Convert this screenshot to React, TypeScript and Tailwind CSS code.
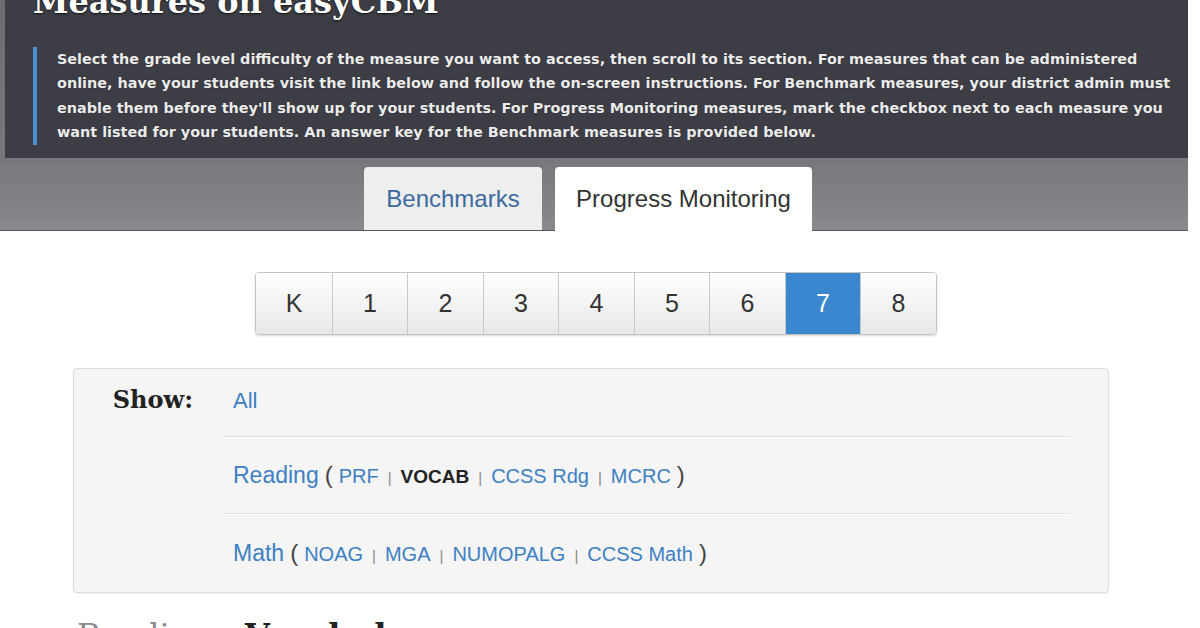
import React from "react";

const grades = ["K", "1", "2", "3", "4", "5", "6", "7", "8"];
const active = "7";

const sans = "font-['Liberation_Sans',Arial,sans-serif]";
const serif = "font-['DejaVu_Serif','Liberation_Serif',serif]";

const Pipe = () => <span className="mx-[9px] text-[15px] text-[#888]">|</span>;

const Sub = ({ children, bold }: { children: React.ReactNode; bold?: boolean }) =>
  bold ? (
    <span className="text-[19px] font-bold text-[#222]">{children}</span>
  ) : (
    <span className="text-[20px] text-[#3d80c3]">{children}</span>
  );

const Paren = ({ children }: { children: string }) => (
  <span className="mx-[6px] text-[24px] text-[#444]">{children}</span>
);

export default function App() {
  return (
    <div className={`w-[1200px] h-[628px] overflow-hidden bg-white ${sans}`}>
      <div className="w-[1188px]">
        {/* header */}
        <div className="bg-[linear-gradient(#6c6c71,#77777c_70%,#8a8a8e)]">
          <div className="ml-[5px] flex h-[158px] flex-col bg-[#3d3d45] pl-[28px] pr-[12px]">
            <h1
              className={`-mt-[14px] text-[32px] leading-none font-bold text-white ${serif} [text-shadow:0_1px_2px_rgba(0,0,0,0.7)]`}
            >
              Measures on easyCBM
            </h1>
            <div className="mt-[29px] border-l-[4px] border-[#4a8fd0] pl-[20px]">
              <p className="text-[14.4px] leading-[24.4px] font-bold text-[#ececec] font-['DejaVu_Sans',sans-serif] [text-shadow:0_0_1px_rgba(0,0,0,0.5)]">
                Select the grade level difficulty of the measure you want to access, then scroll to its section. For measures that can be
                administered online, have your students visit the link below and follow the on-screen instructions. For Benchmark measures,
                your district admin must enable them before they'll show up for your students. For Progress Monitoring measures, mark the
                checkbox next to each measure you want listed for your students. An answer key for the Benchmark measures is provided below.
              </p>
            </div>
          </div>
          {/* tabs */}
          <div className="flex h-[73px] items-end justify-center gap-[13px] pr-[12px] border-b border-[#5a5a5e]">
            <div className="flex h-[63px] w-[178px] items-center justify-center rounded-t-[4px] bg-[#eeeeee] text-[24px] text-[#3b6aa0]">
              Benchmarks
            </div>
            <div className="flex h-[64px] w-[257px] -mb-px items-center justify-center rounded-t-[4px] bg-white text-[24px] text-[#333]">
              Progress Monitoring
            </div>
          </div>
        </div>

        {/* grade picker */}
        <div className="mt-[41px] flex justify-center pl-[4px]">
          <div className="flex h-[63px] overflow-hidden rounded-[4px] border border-[#c4c4c4] shadow-[0_1px_2px_rgba(0,0,0,0.15)]">
            {grades.map((g, i) => (
              <div
                key={g}
                className={`flex w-[75.5px] items-center justify-center text-[25px] ${
                  i > 0 ? "border-l border-[#c8c8c8]" : ""
                } ${
                  g === active
                    ? "bg-[#3a87cf] text-white"
                    : "bg-[linear-gradient(#ffffff,#e8e8e8)] text-[#333]"
                }`}
              >
                {g}
              </div>
            ))}
          </div>
        </div>

        {/* show panel */}
        <div className="ml-[73px] mt-[33px] w-[1036px] rounded-[4px] border border-[#dcdcdc] bg-[#f5f5f5] shadow-[0_1px_2px_rgba(0,0,0,0.06)]">
          <div className="flex">
            <div className={`w-[149px] shrink-0 pt-[13px] text-right pr-[30px] text-[24px] leading-[36px] font-bold text-[#222] ${serif}`}>
              Show:
            </div>
            <div className="mr-[38px] flex-1">
              <div className="flex h-[68px] items-center pb-[4px] pl-[10px] border-b border-[#e0e0e0] shadow-[0_1px_0_#ffffff]">
                <span className="text-[22px] leading-none text-[#3d80c3]">All</span>
              </div>
              <div className="flex h-[77px] items-center pl-[10px] border-b border-[#e0e0e0] shadow-[0_1px_0_#ffffff]">
                <div className="leading-none whitespace-nowrap">
                  <span className="text-[23px] text-[#3d80c3]">Reading</span>
                  <Paren>(</Paren>
                  <Sub>PRF</Sub>
                  <Pipe />
                  <Sub bold>VOCAB</Sub>
                  <Pipe />
                  <Sub>CCSS Rdg</Sub>
                  <Pipe />
                  <Sub>MCRC</Sub>
                  <Paren>)</Paren>
                </div>
              </div>
              <div className="flex h-[78px] items-center pl-[10px]">
                <div className="leading-none whitespace-nowrap">
                  <span className="text-[23px] text-[#3d80c3]">Math</span>
                  <Paren>(</Paren>
                  <Sub>NOAG</Sub>
                  <Pipe />
                  <Sub>MGA</Sub>
                  <Pipe />
                  <Sub>NUMOPALG</Sub>
                  <Pipe />
                  <Sub>CCSS Math</Sub>
                  <Paren>)</Paren>
                </div>
              </div>
            </div>
          </div>
        </div>

        {/* section heading */}
        <h2 className={`ml-[77px] mt-[26px] text-[32px] leading-none ${serif}`}>
          <span className="text-[#8a8a8a]">Reading</span>{" "}
          <span className="ml-[24px] font-bold text-[#222]">Vocabulary</span>
        </h2>
      </div>
    </div>
  );
}
